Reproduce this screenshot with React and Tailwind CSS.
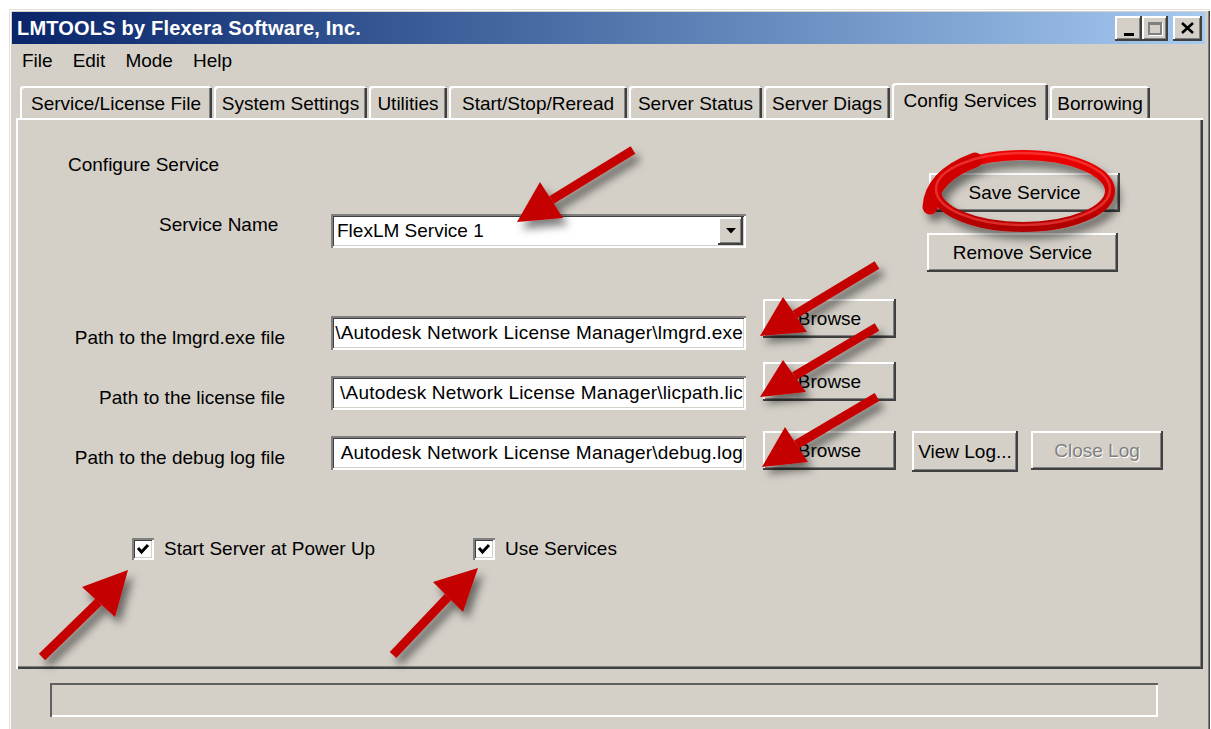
import React from 'react'

// classic 3D bevels
const raised =
  'bg-[#d4d0c8] shadow-[inset_-2px_-2px_#404040,inset_2px_2px_#ffffff,inset_-3px_-3px_#808080]'
const sunken =
  'bg-white shadow-[inset_2px_2px_#808080,inset_-2px_-2px_#ffffff,inset_3px_3px_#404040,inset_-3px_-3px_#d4d0c8]'

const tabs = [
  { label: 'Service/License File', w: 'w-[192px]' },
  { label: 'System Settings', w: 'w-[153px]' },
  { label: 'Utilities', w: 'w-[78px]' },
  { label: 'Start/Stop/Reread', w: 'w-[178px]' },
  { label: 'Server Status', w: 'w-[133px]' },
  { label: 'Server Diags', w: 'w-[126px]' },
  { label: 'Config Services', w: 'w-[156px]', active: true },
  { label: 'Borrowing', w: 'w-[100px]' },
]

const arrows = [
  { tail: [633, 150], tip: [517, 222], wings: [[540, 182], [563, 218]] },
  { tail: [877, 265], tip: [760, 336], wings: [[783, 297], [807, 332]] },
  { tail: [877, 327], tip: [760, 397], wings: [[783, 360], [806, 392]] },
  { tail: [877, 397], tip: [762, 467], wings: [[785, 427], [808, 462]] },
  { tail: [42, 657], tip: [128, 570], wings: [[82, 587], [115, 617]] },
  { tail: [393, 655], tip: [478, 568], wings: [[433, 582], [463, 612]] },
]

function Button({ children, className = '', disabled }) {
  return (
    <div
      className={`${raised} flex items-center justify-center ${
        disabled ? 'text-[#808080] [text-shadow:1px_1px_0_#ffffff]' : 'text-black'
      } ${className}`}
    >
      {children}
    </div>
  )
}

function Field({ value, className = '' }) {
  return (
    <div className={`${sunken} flex h-[34px] w-[415px] items-center justify-end overflow-hidden pl-[5px] pr-[3px] ${className}`}>
      <span className="whitespace-nowrap tracking-[0.2px]">{value}</span>
    </div>
  )
}

function CheckBox({ label, className = '' }) {
  return (
    <div className={`flex items-start ${className}`}>
      <div className={`${sunken} flex h-[22px] w-[22px] items-center justify-center`}>
        <svg width="14" height="14" viewBox="0 0 14 14">
          <polyline points="2,6 5.5,10 12,3" fill="none" stroke="#000" strokeWidth="3" />
        </svg>
      </div>
      <span className="ml-[10px] mt-[1px]">{label}</span>
    </div>
  )
}

function TitleButton({ children, className = '' }) {
  return <div className={`${raised} flex h-[25px] items-center justify-center ${className}`}>{children}</div>
}

function Annotations() {
  return (
    <svg className="pointer-events-none absolute left-0 top-0" width="1211" height="729">
      <defs>
        <filter id="drop" x="-30%" y="-30%" width="170%" height="170%">
          <feDropShadow dx="5" dy="7" stdDeviation="4" floodColor="#000" floodOpacity="0.5" />
        </filter>
        <linearGradient id="ring" x1="0" y1="0" x2="0" y2="1">
          <stop offset="0" stopColor="#ee0000" />
          <stop offset="1" stopColor="#b00000" />
        </linearGradient>
      </defs>
      {arrows.map((a, i) => {
        const mid = [(a.wings[0][0] + a.wings[1][0]) / 2, (a.wings[0][1] + a.wings[1][1]) / 2]
        return (
          <g key={i} filter="url(#drop)">
            <line x1={a.tail[0]} y1={a.tail[1]} x2={mid[0]} y2={mid[1]} stroke="#c40000" strokeWidth="9" />
            <polygon
              points={`${a.tip[0]},${a.tip[1]} ${a.wings[0][0]},${a.wings[0][1]} ${a.wings[1][0]},${a.wings[1][1]}`}
              fill="#c40000"
            />
          </g>
        )
      })}
      <g filter="url(#drop)">
        <ellipse cx="1023" cy="191" rx="87" ry="36" fill="none" stroke="url(#ring)" strokeWidth="10" />
        <path d="M975 160 Q932 176 930 207" fill="none" stroke="#d00000" strokeWidth="15" strokeLinecap="round" />
      </g>
      <ellipse cx="1023" cy="189" rx="87" ry="36" fill="none" stroke="#ff5050" strokeWidth="2.5" opacity="0.55" />
    </svg>
  )
}

export default function App() {
  return (
    <div className="relative h-[729px] w-[1211px] overflow-hidden bg-white font-['Liberation_Sans',Arial,sans-serif] text-[19px] leading-[20px] text-black">
      <div className="ml-[9px] mt-[9px] h-[740px] w-[1201px] bg-[#d4d0c8] pl-[3px] pr-[5px] pt-[3px] shadow-[inset_1px_1px_#e4e1da,inset_2px_2px_#ffffff,inset_-1px_-1px_#404040,inset_-2px_-2px_#808080]">
        {/* title bar */}
        <div className="flex h-[32px] items-center justify-between bg-linear-to-r from-[#0a246a] to-[#a6caf0] pl-[5px] pr-[3px]">
          <span className="text-[20px] font-bold tracking-[0.2px] text-white">LMTOOLS by Flexera Software, Inc.</span>
          <div className="flex items-center">
            <TitleButton className="w-[27px] items-end pb-[5px]">
              <div className="h-[3px] w-[10px] bg-black" />
            </TitleButton>
            <TitleButton className="w-[26px]">
              <div className="h-[13px] w-[14px] border-[2px] border-t-[3px] border-[#808080] shadow-[1px_1px_#ffffff]" />
            </TitleButton>
            <TitleButton className="ml-[5px] w-[29px]">
              <svg width="13" height="12" viewBox="0 0 13 12">
                <path d="M1 1 L12 11 M12 1 L1 11" stroke="#000" strokeWidth="2.6" />
              </svg>
            </TitleButton>
          </div>
        </div>

        {/* menu bar */}
        <div className="flex h-[34px] items-center">
          {['File', 'Edit', 'Mode', 'Help'].map((m) => (
            <span key={m} className="px-[10px]">
              {m}
            </span>
          ))}
        </div>

        {/* tab strip */}
        <div className="flex h-[40px] items-end gap-[2px] pl-[8px]">
          {tabs.map((t) =>
            t.active ? (
              <div
                key={t.label}
                className={`relative z-10 -mb-[2px] flex h-[37px] justify-center rounded-t-[3px] bg-[#d4d0c8] pt-[8px] shadow-[inset_2px_2px_#ffffff,inset_-2px_0_#404040,inset_-3px_0_#808080] ${t.w}`}
              >
                {t.label}
              </div>
            ) : (
              <div
                key={t.label}
                className={`flex h-[32px] items-center justify-center rounded-t-[3px] pt-[4px] shadow-[inset_2px_2px_#ffffff,inset_-2px_0_#404040,inset_-3px_0_#808080] ${t.w}`}
              >
                {t.label}
              </div>
            )
          )}
        </div>

        {/* tab page */}
        <div className="ml-[4px] h-[551px] w-[1187px] shadow-[inset_2px_2px_#ffffff,inset_-2px_-2px_#404040,inset_-3px_-3px_#808080]">
          <div className="flex">
            <div className="w-[730px] pt-[37px]">
              <div className="pl-[52px]">Configure Service</div>
              <div className="mt-[39px] flex items-start">
                <div className="mt-[1px] w-[315px] pl-[143px]">Service Name</div>
                <div className={`${sunken} flex h-[34px] w-[415px] items-center justify-between pl-[6px] pr-[3px]`}>
                  <span>FlexLM Service 1</span>
                  <div className={`${raised} flex h-[28px] w-[25px] items-center justify-center`}>
                    <svg width="10" height="6" viewBox="0 0 10 6">
                      <polygon points="0,0 10,0 5,5.5" fill="#000" />
                    </svg>
                  </div>
                </div>
              </div>
            </div>
            <div className="ml-[182px] flex flex-col pt-[55px]">
              <Button className="ml-[1px] h-[39px] w-[191px]">Save Service</Button>
              <Button className="-ml-[1px] mt-[21px] h-[39px] w-[191px]">Remove Service</Button>
            </div>
          </div>

          <div className="mt-[27px] flex items-start">
            <div className="mt-[29px] w-[269px] text-right">Path to the lmgrd.exe file</div>
            <Field className="ml-[46px] mt-[17px]" value="\Autodesk Network License Manager\lmgrd.exe" />
            <Button className="ml-[17px] h-[39px] w-[133px]">Browse</Button>
          </div>

          <div className="mt-[12px] flex items-start">
            <div className="mt-[26px] w-[269px] text-right">Path to the license file</div>
            <Field className="ml-[46px] mt-[14px]" value="\Autodesk Network License Manager\licpath.lic" />
            <Button className="ml-[17px] h-[39px] w-[133px]">Browse</Button>
          </div>

          <div className="mt-[21px] flex items-start">
            <div className="mt-[17px] w-[269px] text-right">Path to the debug log file</div>
            <Field className="ml-[46px] mt-[5px]" value="Autodesk Network License Manager\debug.log" />
            <Button className="ml-[17px] h-[39px] w-[133px]">Browse</Button>
            <Button className="ml-[16px] h-[41px] w-[106px]">View Log...</Button>
            <Button className="ml-[13px] h-[39px] w-[132px]" disabled>
              Close Log
            </Button>
          </div>

          <div className="mt-[66px] flex items-start">
            <CheckBox className="ml-[116px] w-[341px]" label="Start Server at Power Up" />
            <CheckBox label="Use Services" />
          </div>
        </div>

        {/* status bar */}
        <div className="ml-[38px] mt-[14px] h-[34px] w-[1108px] shadow-[inset_2px_2px_#606060,inset_-2px_-2px_#ffffff]" />
      </div>
      <Annotations />
    </div>
  )
}
